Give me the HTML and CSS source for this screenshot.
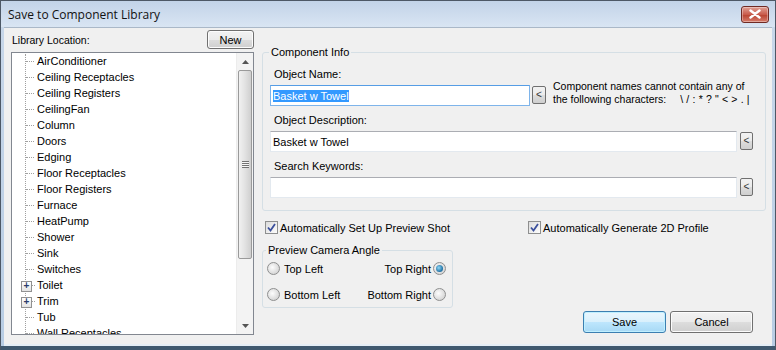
FILE: index.html
```html
<!DOCTYPE html>
<html lang="en">
<head>
  <meta charset="UTF-8" />
  <title>Save to Component Library</title>
  <link rel="stylesheet" href="styles.css">
</head>
<body>
  <div class="window">
    <div class="titlebar">
      <span class="title">Save to Component Library</span>
      <button class="close-btn" aria-label="Close">
        <svg width="12" height="10" viewBox="0 0 12 10"><path d="M1.5 1.5 L10.5 8.5 M10.5 1.5 L1.5 8.5" stroke="#fff" stroke-width="2.4" stroke-linecap="round"/></svg>
      </button>
    </div>

    <div class="client">
      <!-- left: library tree -->
      <div class="left">
        <div class="left-head">
          <span>Library Location:</span>
          <button class="btn btn-new">New</button>
        </div>
        <div class="tree">
          <ul class="tree-list">
            <li>AirConditioner</li>
            <li>Ceiling Receptacles</li>
            <li>Ceiling Registers</li>
            <li>CeilingFan</li>
            <li>Column</li>
            <li>Doors</li>
            <li>Edging</li>
            <li>Floor Receptacles</li>
            <li>Floor Registers</li>
            <li>Furnace</li>
            <li>HeatPump</li>
            <li>Shower</li>
            <li>Sink</li>
            <li>Switches</li>
            <li class="has-kids">Toilet</li>
            <li class="has-kids">Trim</li>
            <li>Tub</li>
            <li class="cut">Wall Receptacles</li>
          </ul>
          <div class="scrollbar">
            <div class="sb-arrow">
              <svg width="7" height="4" viewBox="0 0 7 4"><path d="M0 4 L3.5 0 L7 4 Z" fill="#555"/></svg>
            </div>
            <div class="sb-track">
              <div class="sb-thumb"><span class="grip"></span></div>
            </div>
            <div class="sb-arrow">
              <svg width="7" height="4" viewBox="0 0 7 4"><path d="M0 0 L7 0 L3.5 4 Z" fill="#555"/></svg>
            </div>
          </div>
        </div>
      </div>

      <!-- right: component info -->
      <div class="right">
        <fieldset class="group info">
          <legend>Component Info</legend>

          <label class="field-label">Object Name:</label>
          <div class="field-row">
            <div class="textbox name-box"><span class="selected">Basket w Towel</span></div>
            <button class="arrow-btn name-arrow">&lt;</button>
            <div class="hint">
              <div>Component names cannot contain any of</div>
              <div>the following characters:<span class="chars">\ / : * ? " &lt; &gt; . |</span></div>
            </div>
          </div>

          <label class="field-label">Object Description:</label>
          <div class="field-row">
            <div class="textbox wide-box">Basket w Towel</div>
            <button class="arrow-btn">&lt;</button>
          </div>

          <label class="field-label">Search Keywords:</label>
          <div class="field-row">
            <div class="textbox wide-box"></div>
            <button class="arrow-btn">&lt;</button>
          </div>
        </fieldset>

        <div class="checks">
          <label class="check"><span class="box"><svg width="9" height="9" viewBox="0 0 9 9"><path d="M1 4.5 L3.5 7.5 L8 1" fill="none" stroke="#3a4f9c" stroke-width="1.8"/></svg></span>Automatically Set Up Preview Shot</label>
          <label class="check"><span class="box"><svg width="9" height="9" viewBox="0 0 9 9"><path d="M1 4.5 L3.5 7.5 L8 1" fill="none" stroke="#3a4f9c" stroke-width="1.8"/></svg></span>Automatically Generate 2D Profile</label>
        </div>

        <div class="lower">
          <fieldset class="group camera">
            <legend>Preview Camera Angle</legend>
            <div class="radio-grid">
              <label class="radio"><span class="dot"></span>Top Left</label>
              <label class="radio radio-r">Top Right<span class="dot on"></span></label>
              <label class="radio"><span class="dot"></span>Bottom Left</label>
              <label class="radio radio-r">Bottom Right<span class="dot"></span></label>
            </div>
          </fieldset>

          <div class="actions">
            <button class="btn btn-save">Save</button>
            <button class="btn btn-cancel">Cancel</button>
          </div>
        </div>
      </div>
    </div>
  </div>
</body>
</html>
```

FILE: styles.css
```css
:root {
  --face: #f0f0f0;
  --text: #000;
  --group-line: #d5dfe5;
  --btn-border: #707070;
}

* {
  box-sizing: border-box;
}

html, body {
  margin: 0;
  padding: 0;
  background: #fff;
}

body {
  font-family: 'Liberation Sans', Arial, sans-serif;
  font-size: 10.5px;
  color: var(--text);
  width: 776px;
  height: 350px;
  overflow: hidden;
}

button {
  font-family: inherit;
  font-size: 10.5px;
  color: var(--text);
  padding: 0;
  margin: 0;
}

.window {
  width: 776px;
  height: 350px;
  display: flex;
  flex-direction: column;
  border: 1px solid #4d5866;
  border-bottom: 0;
  background: linear-gradient(#c9d8ea, #b8cde4);
  padding: 0 3px 4px 3px;
  box-shadow: inset 0 -4px 0 #40596f;
}

/* title bar */
.titlebar {
  height: 26px;
  flex: none;
  display: flex;
  align-items: center;
  justify-content: space-between;
  background: linear-gradient(#c2d3e8, #d9e5f3);
  margin: 0 -3px;
  padding: 0 6px 0 7px;
}

.title {
  font-family: 'Open Sans', 'Liberation Sans', sans-serif;
  font-size: 12px;
  color: #111;
  margin-top: 1px;
}

.close-btn {
  width: 28px;
  height: 17px;
  border: 1px solid #6f2a24;
  border-radius: 3px;
  background: linear-gradient(#e0a196, #c95b4b 50%, #b8412f 51%, #d67c6b);
  display: flex;
  align-items: center;
  justify-content: center;
  box-shadow: inset 0 0 0 1px rgba(255, 255, 255, 0.35);
}

/* client area */
.client {
  flex: 1;
  display: flex;
  gap: 8px;
  background: var(--face);
  padding: 2px 7px 0 7px;
  border-bottom: 2px solid #e6eef6;
  border-top: 1px solid #aab8c8;
  min-height: 0;
}

.left {
  width: 243px;
  flex: none;
  display: flex;
  flex-direction: column;
}

.left-head {
  display: flex;
  justify-content: space-between;
  align-items: center;
  height: 19px;
  padding-left: 1px;
}

.btn {
  height: 19px;
  border: 1px solid var(--btn-border);
  border-radius: 3px;
  background: linear-gradient(#f2f2f2 0%, #ebebeb 50%, #dddddd 51%, #cfcfcf 100%);
  box-shadow: inset 0 0 0 1px #fcfcfc;
}

.btn-new {
  width: 47px;
  font-size: 11px;
}

.tree {
  margin-top: 3px;
  height: 283px;
  border: 1px solid #828790;
  background: #fff;
  display: flex;
  overflow: hidden;
}

.tree-list {
  list-style: none;
  margin: 0;
  padding: 0;
  flex: 1;
  position: relative;
  overflow: hidden;
}

.tree-list::before {
  content: "";
  position: absolute;
  left: 13px;
  top: 1px;
  bottom: 0;
  border-left: 1px dotted #a0a0a0;
}

.tree-list li {
  height: 16px;
  line-height: 16px;
  padding-left: 25px;
  font-size: 11px;
  white-space: nowrap;
  position: relative;
}

.tree-list li.cut {
  height: 10px;
}

.tree-list li::before {
  content: "";
  position: absolute;
  left: 14px;
  top: 8px;
  width: 8px;
  border-top: 1px dotted #a0a0a0;
}

.tree-list li.has-kids::after {
  content: "+";
  position: absolute;
  left: 9px;
  top: 4px;
  width: 9px;
  height: 9px;
  border: 1px solid #919191;
  background: linear-gradient(#fff, #e3e3e3);
  font-size: 10px;
  line-height: 7px;
  text-align: center;
  color: #2a3b6c;
  font-weight: bold;
}

.tree-list li.has-kids::before {
  left: 19px;
  width: 4px;
}

.scrollbar {
  width: 17px;
  flex: none;
  display: flex;
  flex-direction: column;
  background: #f3f3f3;
  border-left: 1px solid #ececec;
}

.sb-arrow {
  height: 17px;
  display: flex;
  align-items: center;
  justify-content: center;
}

.sb-track {
  flex: 1;
  padding: 0 1px;
}

.sb-thumb {
  height: 189px;
  border: 1px solid #9a9a9a;
  border-radius: 2px;
  background: linear-gradient(90deg, #f1f1f1, #e2e2e2 50%, #cfcfcf);
  display: flex;
  align-items: center;
  justify-content: center;
}

.grip {
  width: 7px;
  height: 7px;
  background: repeating-linear-gradient(#444 0 1px, #fff 1px 2px);
  opacity: 0.7;
}

/* right column */
.right {
  flex: 1;
  min-width: 0;
  display: flex;
  flex-direction: column;
  padding-top: 16px;
}

.group {
  margin: 0;
  min-width: 0;
  border: 1px solid var(--group-line);
  border-radius: 3px;
}

.group legend {
  padding: 0 2px;
  margin-left: -1px;
  line-height: 13px;
  font-size: 11px;
  color: #000;
}

.info {
  width: 504px;
  padding: 8px 13px 12px 7px;
  display: flex;
  flex-direction: column;
}

.field-label {
  display: block;
  line-height: 14px;
  padding-left: 4px;
  margin-bottom: 4px;
  font-size: 11px;
}

.field-row {
  display: flex;
  align-items: flex-start;
  margin-bottom: 7px;
}

.field-row:last-child {
  margin-bottom: 0;
}

.textbox {
  height: 21px;
  flex: none;
  border: 1px solid #e3e9ef;
  border-top-color: #abadb3;
  background: #fff;
  padding: 3px 2px;
  line-height: 14px;
  font-size: 11px;
  white-space: nowrap;
}

.name-box {
  width: 260px;
  border-color: #7eb4ea;
  border-top-color: #569de5;
}

.selected {
  background: #3399ff;
  color: #fff;
}

.wide-box {
  width: 467px;
}

.arrow-btn {
  width: 13px;
  height: 18px;
  flex: none;
  margin-top: 1px;
  margin-left: 2px;
  border: 1px solid var(--btn-border);
  border-radius: 2px;
  background: linear-gradient(#f2f2f2, #ebebeb 50%, #dddddd 51%, #cfcfcf);
  line-height: 14px;
  font-size: 10px;
  color: #333;
}

.wide-box + .arrow-btn {
  margin-left: 3px;
}

.name-arrow {
  width: 14px;
}

.hint {
  margin-left: 7px;
  margin-top: -5px;
  line-height: 13px;
  font-size: 10.5px;
  white-space: nowrap;
}

.chars {
  margin-left: 14px;
  word-spacing: 0.3px;
}

/* checkboxes */
.checks {
  display: grid;
  grid-template-columns: 263px auto;
  padding: 10px 0 0 3px;
  height: 28px;
}

.check {
  display: flex;
  align-items: center;
  height: 13px;
  font-size: 11px;
}

.box {
  width: 13px;
  height: 13px;
  border: 1px solid #8e8f8f;
  background: linear-gradient(135deg, #dcdcdc, #fdfdfd);
  margin-right: 2px;
  display: flex;
  align-items: center;
  justify-content: center;
}

/* camera + buttons */
.lower {
  display: flex;
  align-items: flex-end;
  margin-top: 5px;
}

.camera {
  width: 191px;
  height: 64px;
  padding: 5px 6px 0 4px;
}

.radio-grid {
  display: grid;
  grid-template-columns: 1fr 1fr;
  row-gap: 13px;
}

.radio {
  display: flex;
  align-items: center;
  height: 13px;
  font-size: 11px;
}

.radio-r {
  justify-content: flex-end;
}

.dot {
  width: 13px;
  height: 13px;
  border-radius: 50%;
  border: 1px solid #8e8f8f;
  background: radial-gradient(circle at 40% 40%, #fdfdfd, #d8d8d8 70%);
  margin-right: 4px;
  position: relative;
}

.radio-r .dot {
  margin-right: 0;
  margin-left: 2px;
}

.dot.on::after {
  content: "";
  position: absolute;
  left: 2px;
  top: 2px;
  width: 7px;
  height: 7px;
  border-radius: 50%;
  background: radial-gradient(circle at 40% 40%, #8fd8f7, #1d6ea2 70%);
}

.actions {
  margin-left: auto;
  margin-right: 12px;
  margin-bottom: -25px;
  display: flex;
  gap: 4px;
}

.btn-save,
.btn-cancel {
  width: 83px;
  height: 22px;
  font-size: 11px;
}

.btn-save {
  border-color: #3c7fb1;
  background: linear-gradient(#eaf6fd 0%, #d9f0fc 50%, #bee6fd 51%, #a7d9f5 100%);
  box-shadow: inset 0 0 0 1px #c0f0ff;
}
```
